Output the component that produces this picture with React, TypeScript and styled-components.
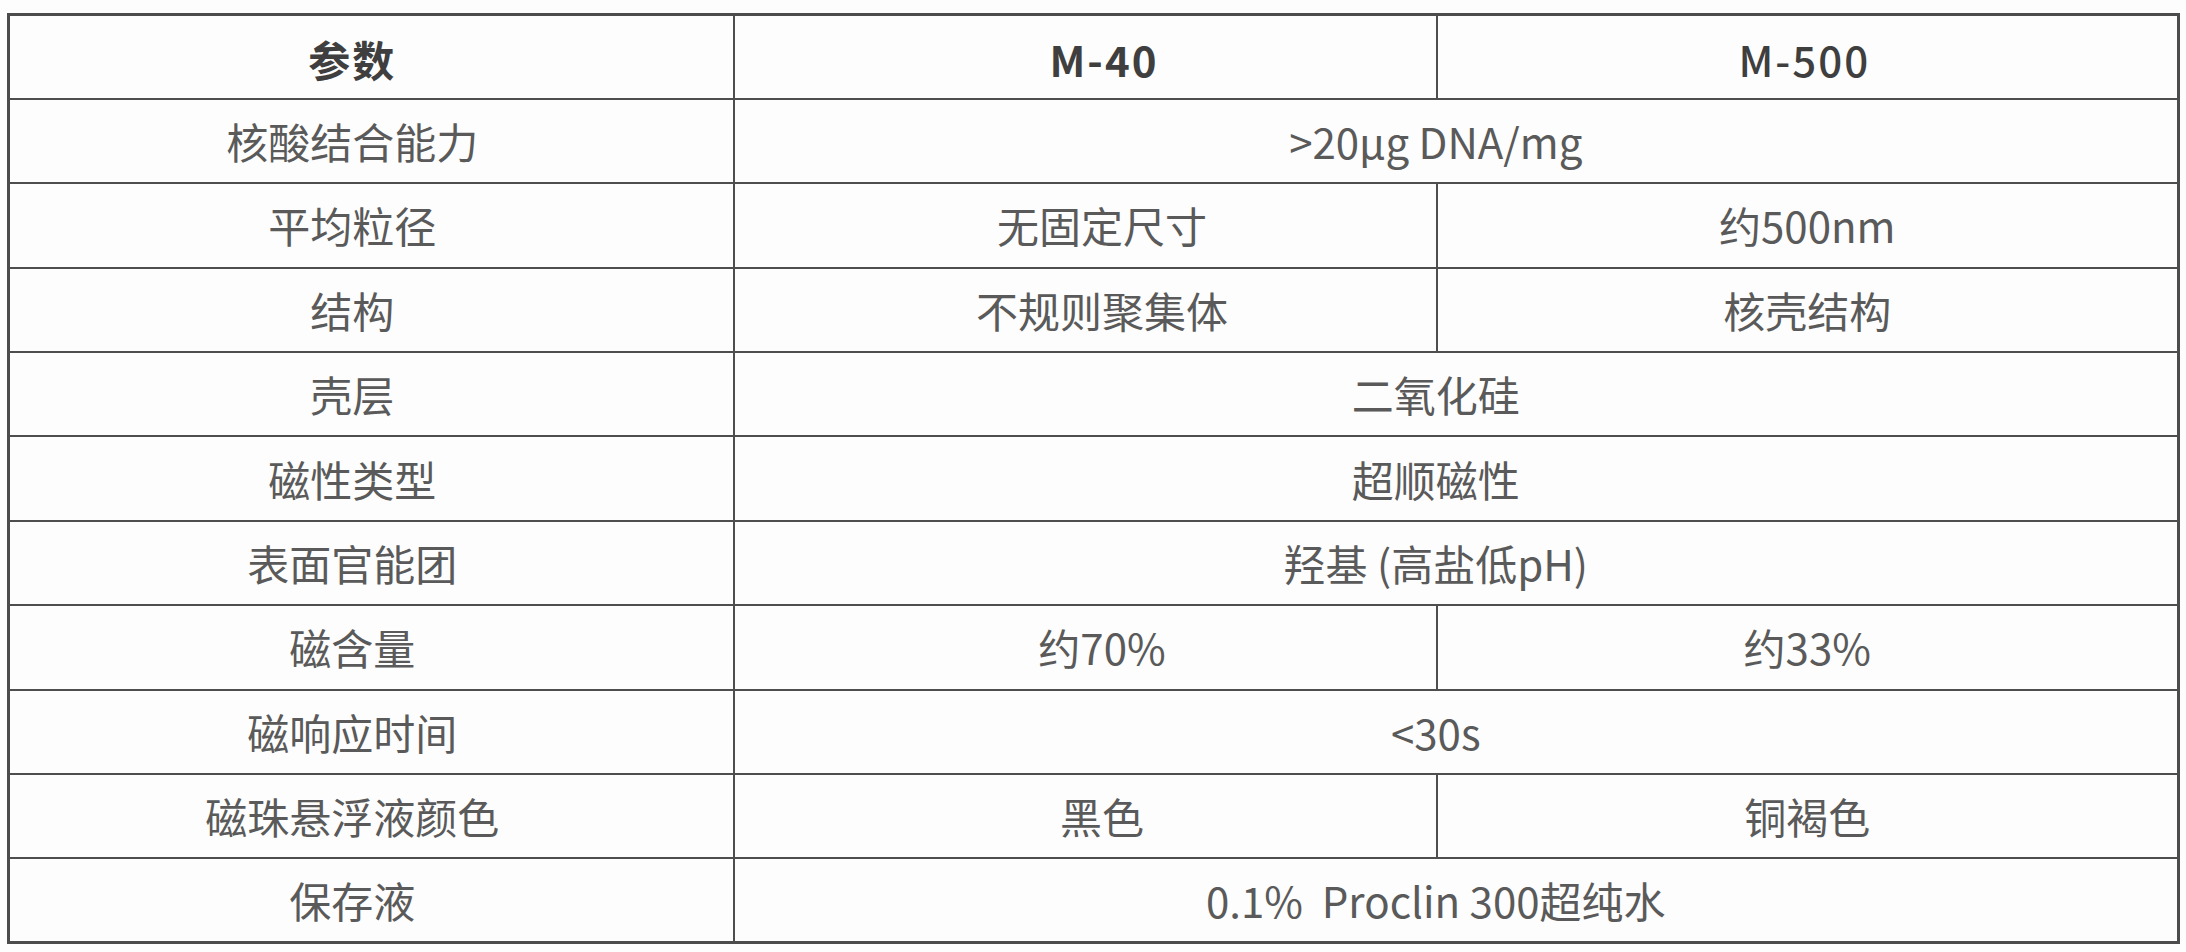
import React from "react";
import styled, { createGlobalStyle } from "styled-components";

const Global = createGlobalStyle`
  html, body {
    margin: 0;
    padding: 0;
    background: #fdfdfd;
  }
  body {
    font-family: "Noto Sans CJK SC", "Noto Sans", sans-serif;
  }
`;

const Page = styled.div`
  width: 2186px;
  height: 952px;
  padding: 13px 0 0 7px;
  box-sizing: border-box;
  background: #fdfdfd;
`;

const Table = styled.table`
  width: 2170px;
  table-layout: fixed;
  border-collapse: collapse;
  border: 3px solid #4c4c4c;
  font-size: 42px;
  line-height: 1;
`;

const Row = styled.tr`
  height: 84.4px;
`;

const Cell = styled.td<{ $shift?: number; $head?: boolean; $weight?: number }>`
  border: 2px solid #4e4e4e;
  text-align: center;
  vertical-align: middle;
  padding: ${(p) => (p.$head ? "4px" : "0")}
    ${(p) => (p.$shift && p.$shift < 0 ? -p.$shift * 2 : 0)}px 0
    ${(p) => (p.$shift && p.$shift > 0 ? p.$shift * 2 : 0)}px;
  font-weight: ${(p) => p.$weight ?? (p.$head ? 700 : 400)};
  color: ${(p) => (p.$head ? "#3f3f3f" : "#5a5a5a")};
  letter-spacing: ${(p) => (p.$head ? "2px" : "0")};
  white-space: pre;
`;

type RowData = { label: string; a: string; b?: string };

const rows: RowData[] = [
  { label: "核酸结合能力", a: ">20μg DNA/mg" },
  { label: "平均粒径", a: "无固定尺寸", b: "约500nm" },
  { label: "结构", a: "不规则聚集体", b: "核壳结构" },
  { label: "壳层", a: "二氧化硅" },
  { label: "磁性类型", a: "超顺磁性" },
  { label: "表面官能团", a: "羟基 (高盐低pH)" },
  { label: "磁含量", a: "约70%", b: "约33%" },
  { label: "磁响应时间", a: "<30s" },
  { label: "磁珠悬浮液颜色", a: "黑色", b: "铜褐色" },
  { label: "保存液", a: "0.1%  Proclin 300超纯水" },
];

export default function App() {
  return (
    <Page>
      <Global />
      <Table>
        <colgroup>
          <col style={{ width: 725 }} />
          <col style={{ width: 703 }} />
          <col style={{ width: 742 }} />
        </colgroup>
        <tbody>
          <Row>
            <Cell $head $shift={-19}>参数</Cell>
            <Cell $head $shift={19}>M-40</Cell>
            <Cell $head $shift={-3} $weight={500}>M-500</Cell>
          </Row>
          {rows.map((r) =>
            r.b ? (
              <Row key={r.label}>
                <Cell $shift={-19}>{r.label}</Cell>
                <Cell $shift={17}>{r.a}</Cell>
                <Cell $shift={0}>{r.b}</Cell>
              </Row>
            ) : (
              <Row key={r.label}>
                <Cell $shift={-19}>{r.label}</Cell>
                <Cell colSpan={2} $shift={-20}>
                  {r.a}
                </Cell>
              </Row>
            )
          )}
        </tbody>
      </Table>
    </Page>
  );
}
